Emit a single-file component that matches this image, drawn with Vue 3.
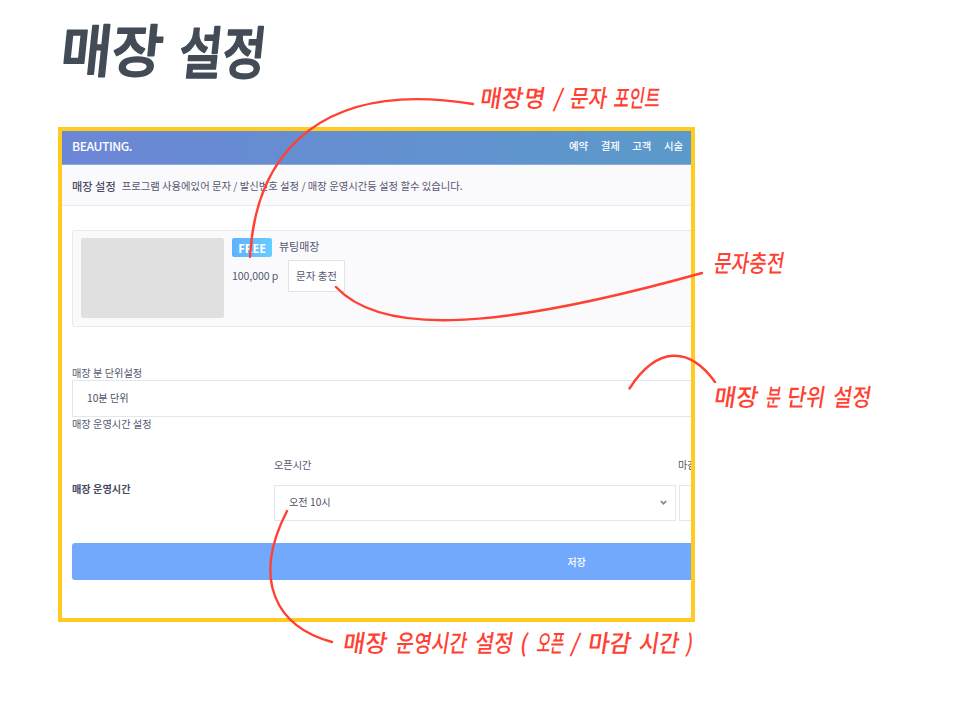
<script setup>
const menus = ['예약', '결제', '고객', '시술']

const arrows = [
  'M250 257 C256 148 326 80 473 104',
  'M336 287 C378 332 480 335 702 273',
  'M629.500 388.500 C657 346 689 346 715 382',
  'M287 511 C251 581 277 627 332 642'
]

const words = [
  { t: '매장', x: 479, y: 107, w: 43 },
  { t: '명', x: 523, y: 107, w: 21 },
  { t: '/', x: 553, y: 107, w: 9 },
  { t: '문자', x: 569, y: 107, w: 37 },
  { t: '포인트', x: 613, y: 107, w: 46 },
  { t: '문자충전', x: 713, y: 272, w: 70 },
  { t: '매장', x: 713, y: 406, w: 44 },
  { t: '분', x: 765, y: 406, w: 15 },
  { t: '단위', x: 786, y: 406, w: 38 },
  { t: '설정', x: 832, y: 406, w: 38 },
  { t: '매장', x: 342, y: 652, w: 44 },
  { t: '운영시간', x: 395, y: 652, w: 71 },
  { t: '설정', x: 474, y: 652, w: 38 },
  { t: '(', x: 519, y: 652, w: 8 },
  { t: '오픈', x: 536, y: 652, w: 27 },
  { t: '/', x: 570, y: 652, w: 9 },
  { t: '마감', x: 587, y: 652, w: 43 },
  { t: '시간', x: 638, y: 652, w: 40 },
  { t: ')', x: 685, y: 652, w: 7 }
]
</script>

<template>
  <main class="slide">
    <section class="frame">
      <div class="page">
        <header class="topbar">
          <strong class="brand">BEAUTING.</strong>
          <nav class="menu"><span v-for="m in menus" :key="m">{{ m }}</span></nav>
        </header>
        <div class="intro">
          <h2>매장 설정</h2>
          <p>프로그램 사용에있어 문자 / 발신번호 설정 / 매장 운영시간등 설정 할수 있습니다.</p>
        </div>
        <div class="content">
          <div class="card">
            <div class="photo"></div>
            <div class="info">
              <div class="row name"><span class="badge">FREE</span><span class="shop">뷰팅매장</span></div>
              <div class="row"><span class="points">100,000 p</span><button class="charge">문자 충전</button></div>
            </div>
          </div>
          <div class="label unit">매장 분 단위설정</div>
          <div class="select">10분 단위</div>
          <div class="label">매장 운영시간 설정</div>
          <div class="hours">
            <div class="hours-title">매장 운영시간</div>
            <div class="field">
              <div class="field-label">오픈시간</div>
              <div class="select">오전 10시
                <svg class="chevron" viewBox="0 0 7 5"><path d="M.8 1 L3.5 3.7 L6.2 1" /></svg>
              </div>
            </div>
            <div class="field close">
              <div class="field-label">마감</div>
              <div class="select"></div>
            </div>
          </div>
          <button class="save">저장</button>
        </div>
      </div>
    </section>

    <svg class="notes" viewBox="0 0 960 714">
      <g class="title">
        <text transform="translate(59 72) skewX(-6)" textLength="102" lengthAdjust="spacingAndGlyphs">매장</text>
        <text transform="translate(177 74) skewX(-6)" textLength="87" lengthAdjust="spacingAndGlyphs">설정</text>
      </g>
      <path v-for="d in arrows" :key="d" :d="d" class="arrow" />
      <text
        v-for="n in words"
        :key="n.x + n.t"
        class="note"
        :transform="`translate(${n.x} ${n.y}) skewX(-9)`"
        :textLength="n.w"
        lengthAdjust="spacingAndGlyphs"
      >{{ n.t }}</text>
    </svg>
  </main>
</template>

<style>
body {
  margin: 0;
  background: #fff;
}
</style>

<style scoped>
* {
  box-sizing: border-box;
}
.slide {
  position: relative;
  width: 960px;
  height: 714px;
  padding: 127px 0 0 58px;
  overflow: hidden;
  font-family: "Noto Sans CJK KR", sans-serif;
  font-size: 10.2px;
  line-height: 14px;
  color: #555770;
}
.frame {
  width: 637px;
  height: 495px;
  border: 4px solid #ffcb1f;
  overflow: hidden;
}
.page {
  width: 1029px;
}
.topbar {
  display: flex;
  align-items: center;
  width: 629px;
  height: 34px;
  padding: 0 8px 3px 10px;
  justify-content: space-between;
  background: linear-gradient(105deg, #6c86d6, #5b9aca);
  border-bottom: 1px solid #8eacd8;
  color: #fff;
}
.brand {
  font-size: 12.2px;
  font-weight: 500;
  letter-spacing: -0.45px;
}
.menu {
  display: flex;
  gap: 12.5px;
  font-size: 10.4px;
  font-weight: 500;
}
.intro {
  display: flex;
  align-items: center;
  height: 41px;
  padding: 1px 10px 0;
  gap: 6px;
  background: #fafafc;
  border-bottom: 1px solid #e9ebef;
}
.intro h2 {
  margin: 0;
  font-size: 11.2px;
  font-weight: 500;
  color: #4b4d66;
}
.intro p {
  margin: 0;
  font-size: 10.35px;
}
.content {
  padding: 24px 10px 0;
}
.card {
  display: flex;
  height: 97px;
  padding: 7px 8px;
  gap: 8px;
  border: 1px solid #e3ebee;
  border-radius: 3px;
  background: #fafafc;
}
.photo {
  width: 143px;
  height: 80px;
  border-radius: 2px;
  background: #e0e0e0;
}
.row {
  display: flex;
  align-items: center;
  gap: 10px;
}
.name {
  gap: 7px;
  height: 19px;
  margin-bottom: 3px;
  font-size: 11px;
}
.shop {
  padding-bottom: 3px;
}
.badge {
  width: 40px;
  height: 19px;
  padding-top: 1px;
  border-radius: 2px;
  background: linear-gradient(90deg, #5eb1ff, #66cdff);
  color: #fff;
  font: 700 11.9px/19px "Open Sans", sans-serif;
  text-align: center;
}
.points {
  width: 46px;
  font-size: 10.5px;
  letter-spacing: -0.05px;
  white-space: nowrap;
}
.charge {
  width: 57px;
  height: 32px;
  padding: 0;
  border: 1px solid #e2e3e6;
  background: #fff;
  color: inherit;
  font: inherit;
  font-size: 10.5px;
}
.label {
  height: 14px;
}
.unit {
  margin-top: 39px;
}
.select {
  display: flex;
  align-items: center;
  justify-content: space-between;
  height: 37px;
  padding: 0 8px 2px 14px;
  border: 1px solid #dfe9ec;
  background: #fff;
  color: #4f5168;
}
.hours {
  display: grid;
  grid-template-columns: 198px 402px 402px;
  column-gap: 4px;
  margin-top: 26px;
}
.hours-title {
  margin-top: 25px;
  font-weight: 700;
  color: #484a62;
}
.field-label {
  height: 28px;
  padding-top: 1px;
}
.field .select {
  height: 36px;
}
.close {
  margin-left: -1px;
}
.close .field-label {
  margin-left: -1px;
}
.chevron {
  width: 7px;
  height: 5px;
  fill: none;
  stroke: #858585;
  stroke-width: 1.7;
}
.save {
  display: block;
  width: 100%;
  height: 37px;
  margin-top: 22px;
  padding: 0;
  border: 0;
  border-radius: 3px;
  background: #73a9fc;
  color: #fff;
  font: inherit;
  font-weight: 500;
}
.notes {
  position: absolute;
  inset: 0;
  width: 960px;
  height: 714px;
}
.title {
  fill: #434c56;
  stroke: #434c56;
  stroke-width: 1.6;
  stroke-linejoin: round;
  font-size: 57px;
  font-weight: 500;
}
.arrow {
  fill: none;
  stroke: #ff4133;
  stroke-width: 2.4;
  stroke-linecap: round;
}
.note {
  fill: #ff4133;
  font-size: 24px;
  font-weight: 500;
}
</style>
